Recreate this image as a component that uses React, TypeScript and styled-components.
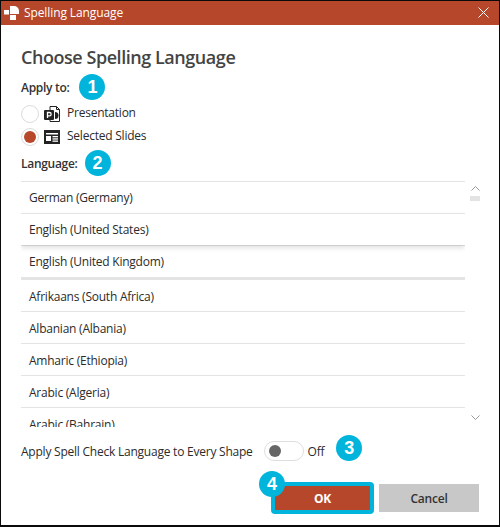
import React from "react";
import styled, { createGlobalStyle } from "styled-components";

const Global = createGlobalStyle`
  html, body { margin: 0; padding: 0; background: #fff; }
  * { box-sizing: border-box; }
`;

const Win = styled.div`
  width: 500px;
  height: 527px;
  border: 1px solid #0a0a0a;
  border-bottom-width: 2px;
  background: #fff;
  color: #2b2b2b;
  font-family: "Open Sans", "Noto Sans", sans-serif;
  font-size: 12px;
  letter-spacing: -0.23px;
  overflow: hidden;
  display: flex;
  flex-direction: column;
`;

const TitleBar = styled.div`
  height: 24px;
  background: #b7472a;
  color: #fff;
  display: flex;
  align-items: center;
  padding: 0 10px 1px 3px;
  gap: 4px;
  flex: none;
  letter-spacing: -0.1px;
`;

const TitleText = styled.span`
  flex: 1;
`;

const Content = styled.div`
  padding: 20px 20px 0 20px;
  display: flex;
  flex-direction: column;
  position: relative;
`;

const Heading = styled.h1`
  margin: 0;
  height: 24px;
  line-height: 24px;
  font-size: 18px;
  font-weight: 600;
  letter-spacing: -0.45px;
  color: #444;
`;

const LabelRow = styled.div<{ $top: number; $gap: number }>`
  display: flex;
  align-items: center;
  height: 20px;
  margin-top: ${(p) => p.$top}px;
  gap: ${(p) => p.$gap}px;
  font-weight: 600;
  letter-spacing: -0.3px;
  color: #333;
`;

const Badge = styled.span`
  width: 26px;
  height: 26px;
  margin: -3px 0;
  border-radius: 50%;
  background: #00b4dc;
  color: #fff;
  font-family: "Liberation Sans", Arial, sans-serif;
  font-size: 18px;
  font-weight: 700;
  letter-spacing: 0;
  display: flex;
  align-items: center;
  justify-content: center;
  flex: none;
`;

const OverlayBadge = styled(Badge)`
  position: absolute;
  left: -16px;
  top: -15px;
  margin: 0;
`;

const RadioGroup = styled.div`
  display: flex;
  flex-direction: column;
  margin-top: 5px;
`;

const RadioRow = styled.div`
  display: flex;
  align-items: center;
  height: 23px;
`;

const Radio = styled.span`
  width: 18px;
  height: 18px;
  border-radius: 50%;
  border: 1px solid #dcdcdc;
  display: flex;
  align-items: center;
  justify-content: center;
  flex: none;
  margin-right: 5px;
`;

const RadioDot = styled.span`
  width: 12px;
  height: 12px;
  border-radius: 50%;
  background: #b7472a;
`;

const RadioLabel = styled.span`
  margin-left: 7px;
  margin-top: -2px;
`;

const ListArea = styled.div`
  display: flex;
  gap: 5px;
  margin-top: 8px;
  height: 247px;
`;

const List = styled.div`
  width: 444px;
  height: 246px;
  overflow: hidden;
  flex: none;
`;

const Row = styled.div<{ $raised?: boolean; $thick?: boolean; $lower?: boolean }>`
  height: ${(p) => (p.$thick ? 34 : 32)}px;
  padding: ${(p) => (p.$thick ? "1px" : p.$lower ? "2px" : "0")} 8px 0;
  border-top: ${(p) => (p.$thick ? 3 : 1)}px solid #e4e4e4;
  display: flex;
  align-items: center;
  position: relative;
  background: #fff;
  box-shadow: ${(p) => (p.$raised ? "0 3px 5px rgba(0,0,0,0.12)" : "none")};
  z-index: ${(p) => (p.$raised ? 1 : 0)};
`;

const Scrollbar = styled.div`
  width: 10px;
  height: 247px;
  display: flex;
  flex-direction: column;
  align-items: center;
  padding: 5px 0 8px;
  flex: none;
`;

const Thumb = styled.div`
  width: 10px;
  height: 5px;
  background: #e3e3e3;
  margin-top: 5px;
`;

const ScrollSpacer = styled.div`
  flex: 1;
`;

const ToggleRow = styled.div`
  display: flex;
  align-items: center;
  height: 20px;
  margin-top: 13px;
`;

const Toggle = styled.span`
  width: 40px;
  height: 20px;
  border-radius: 10px;
  border: 1px solid #dedede;
  display: flex;
  align-items: center;
  padding-left: 4px;
  margin-left: 11px;
  flex: none;
`;

const Knob = styled.span`
  width: 12px;
  height: 12px;
  border-radius: 50%;
  background: #666;
`;

const OffLabel = styled.span`
  margin-left: 4px;
  margin-right: 12px;
`;

const ToggleBadge = styled(Badge)`
  margin-top: -9px;
`;

const ButtonRow = styled.div`
  display: flex;
  justify-content: flex-end;
  align-items: center;
  gap: 5px;
  margin-top: 23px;
  height: 28px;
`;

const OkButton = styled.button`
  position: relative;
  width: 103px;
  height: 32px;
  margin: -2px 0;
  border: 4px solid #00b4dc;
  border-radius: 4px;
  padding: 0;
  font-family: inherit;
  font-size: 12px;
  font-weight: 700;
  letter-spacing: -0.2px;
  color: #fff;
  background: #b7472a;
`;

const CancelButton = styled.button`
  width: 100px;
  height: 28px;
  border: none;
  border-radius: 0;
  padding: 0;
  font-family: inherit;
  font-size: 12px;
  font-weight: 600;
  letter-spacing: -0.2px;
  color: #333;
  background: #c8c8c8;
`;

const Icon = styled.svg`
  display: block;
  flex: none;
`;

const AppLogo = () => (
  <Icon width="16" height="16" viewBox="0 0 16 16" fill="#fff">
    <path d="M6 1h4a5 5 0 0 1 5 5v3H6z" />
    <rect x="0" y="5" width="5" height="4.500" />
    <rect x="6" y="10" width="6" height="5" />
  </Icon>
);

const CloseIcon = () => (
  <Icon width="11" height="11" viewBox="0 0 11 11" fill="none" stroke="#fff" strokeWidth="1">
    <path d="M.5.5l10 10M10.500.5l-10 10" />
  </Icon>
);

const PresentationIcon = () => (
  <Icon width="16" height="16" viewBox="0 0 16 16">
    <path d="M6 .5h6.5L15.5 3.5v12H6z" fill="#fff" stroke="#222" strokeWidth="1" />
    <path d="M12.500.5v3h3" fill="none" stroke="#222" strokeWidth="1" />
    <path d="M11 6a3.500 3.500 0 1 1 0 7z" fill="#222" />
    <rect x="0" y="4" width="10" height="10" rx="1" fill="#222" />
    <path d="M3.500 12V6.500h2a1.600 1.600 0 0 1 0 3.300h-2" fill="none" stroke="#fff" strokeWidth="1.300" />
  </Icon>
);

const SlidesIcon = () => (
  <Icon width="16" height="16" viewBox="0 0 16 16">
    <rect x="0" y="1" width="16" height="14" fill="#222" />
    <rect x="2" y="4" width="12" height="1.500" fill="#fff" />
    <rect x="2" y="7" width="5" height="5" fill="#fff" />
    <rect x="8.500" y="7" width="5.500" height="1.300" fill="#fff" />
    <rect x="8.500" y="9.300" width="5.500" height="1.300" fill="#fff" />
    <rect x="8.500" y="11.500" width="5.500" height="1.300" fill="#fff" />
  </Icon>
);

const Chevron = ({ down }: { down?: boolean }) => (
  <Icon width="9" height="5" viewBox="0 0 9 5" fill="none" stroke="#999" strokeWidth="1">
    <path d={down ? "M.5.5l4 4 4-4" : "M.5 4.500l4-4 4 4"} />
  </Icon>
);

const languages = [
  { name: "German (Germany)" },
  { name: "English (United States)", raised: true },
  { name: "English (United Kingdom)" },
  { name: "Afrikaans (South Africa)", thick: true },
  { name: "Albanian (Albania)", lower: true },
  { name: "Amharic (Ethiopia)", lower: true },
  { name: "Arabic (Algeria)", lower: true },
  { name: "Arabic (Bahrain)", lower: true },
];

export default function App() {
  return (
    <>
      <Global />
      <Win>
        <TitleBar>
          <AppLogo />
          <TitleText>Spelling Language</TitleText>
          <CloseIcon />
        </TitleBar>
        <Content>
          <Heading>Choose Spelling Language</Heading>
          <LabelRow $top={8} $gap={10}>
            Apply to:
            <Badge>1</Badge>
          </LabelRow>
          <RadioGroup>
            <RadioRow>
              <Radio />
              <PresentationIcon />
              <RadioLabel>Presentation</RadioLabel>
            </RadioRow>
            <RadioRow>
              <Radio>
                <RadioDot />
              </Radio>
              <SlidesIcon />
              <RadioLabel>Selected Slides</RadioLabel>
            </RadioRow>
          </RadioGroup>
          <LabelRow $top={5} $gap={7}>
            Language:
            <Badge>2</Badge>
          </LabelRow>
          <ListArea>
            <List>
              {languages.map((l) => (
                <Row key={l.name} $raised={l.raised} $thick={l.thick} $lower={l.lower}>
                  {l.name}
                </Row>
              ))}
            </List>
            <Scrollbar>
              <Chevron />
              <Thumb />
              <ScrollSpacer />
              <Chevron down />
            </Scrollbar>
          </ListArea>
          <ToggleRow>
            Apply Spell Check Language to Every Shape
            <Toggle>
              <Knob />
            </Toggle>
            <OffLabel>Off</OffLabel>
            <ToggleBadge>3</ToggleBadge>
          </ToggleRow>
          <ButtonRow>
            <OkButton>
              <OverlayBadge>4</OverlayBadge>
              OK
            </OkButton>
            <CancelButton>Cancel</CancelButton>
          </ButtonRow>
        </Content>
      </Win>
    </>
  );
}
